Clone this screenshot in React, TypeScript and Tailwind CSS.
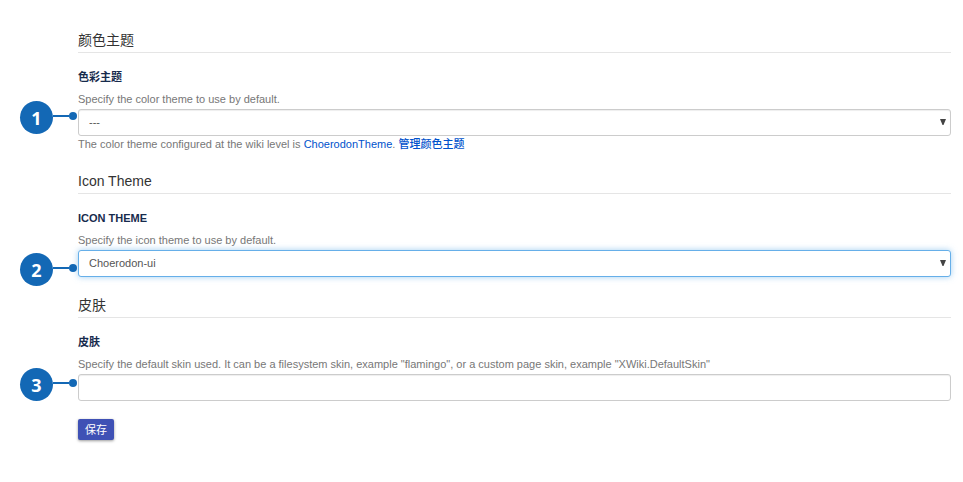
import type { ReactNode } from 'react';

const markerTops = {
  first: '-top-2',
  second: 'top-[3px]',
  third: '-top-[6px]',
};

function Marker({ value, place }: { value: number; place: keyof typeof markerTops }) {
  return (
    <div className={`absolute right-full ${markerTops[place]} flex items-center pr-px`}>
      <span className="flex size-[33px] items-center justify-center rounded-full bg-[#1368b5] font-['Open_Sans',sans-serif] text-lg font-bold text-white">
        {value}
      </span>
      <span className="flex items-center pb-[3px]">
        <span className="h-[2px] w-4 bg-[#1368b5]" />
        <span className="size-2 rounded-full bg-[#1368b5]" />
      </span>
    </div>
  );
}

function Section({ title, label, hint, id, children }: {
  title: string;
  label: string;
  hint: string;
  id: string;
  children: ReactNode;
}) {
  return (
    <section className="flex flex-col gap-[14px]">
      <h2 className="border-b border-[#e5e5e5] text-sm leading-6 text-[#333]">{title}</h2>
      <div className="flex flex-col gap-[2px]">
        <label htmlFor={id} className="self-start text-[11px] font-bold leading-5 text-[#172b4d]">
          {label}
        </label>
        <div className="flex flex-col">
          <p className="leading-5">{hint}</p>
          {children}
        </div>
      </div>
    </section>
  );
}

function Arrow() {
  return (
    <svg viewBox="0 0 6 6" className="pointer-events-none col-start-1 row-start-1 mb-[2px] mr-[5px] size-[6px] self-center justify-self-end fill-[#444]" aria-hidden="true">
      <path d="M0 0h6L3.5 6h-1z" />
    </svg>
  );
}

export default function App() {
  return (
    <main className="bg-white pb-10 pl-[78px] pr-3 pt-7 font-['Liberation_Sans','Noto_Sans_CJK_SC',sans-serif] text-[11px] text-[#777]">
      <form className="flex flex-col gap-4" onSubmit={(e) => e.preventDefault()}>
        <Section title="颜色主题" label="色彩主题" hint="Specify the color theme to use by default." id="color-theme">
          <div className="relative grid">
            <Marker value={1} place="first" />
            <select id="color-theme" className="col-start-1 row-start-1 h-[27px] w-full appearance-none rounded-[3px] border border-[#ccc] bg-white px-[10px] text-[#555] shadow-[inset_0_1px_1px_rgba(0,0,0,0.07)] outline-none">
              <option>---</option>
            </select>
            <Arrow />
          </div>
          <p className="leading-[17px]">
            The color theme configured at the wiki level is{' '}
            <a href="#theme" className="text-[#0052cc]">ChoerodonTheme</a>.{' '}
            <a href="#manage" className="font-medium text-[#0052cc]">管理颜色主题</a>
          </p>
        </Section>
        <Section title="Icon Theme" label="ICON THEME" hint="Specify the icon theme to use by default." id="icon-theme">
          <div className="relative grid">
            <Marker value={2} place="second" />
            <select id="icon-theme" className="col-start-1 row-start-1 h-[27px] w-full appearance-none rounded-[3px] border border-[#66afe9] bg-white px-[10px] text-[#555] shadow-[0_0_6px_rgba(102,175,233,0.6)] outline-none">
              <option>Choerodon-ui</option>
            </select>
            <Arrow />
          </div>
        </Section>
        <Section title="皮肤" label="皮肤" hint={'Specify the default skin used. It can be a filesystem skin, example "flamingo", or a custom page skin, example "XWiki.DefaultSkin"'} id="skin">
          <div className="relative grid">
            <Marker value={3} place="third" />
            <input id="skin" type="text" className="h-[27px] w-full rounded-[3px] border border-[#ccc] px-[10px] text-[#555] shadow-[inset_0_1px_1px_rgba(0,0,0,0.07)] outline-none" />
          </div>
        </Section>
        <button type="submit" className="mt-[2px] h-[21px] self-start rounded-[2px] bg-[#3f51b5] px-[7px] text-[11px] leading-5 text-white shadow-[0_1px_3px_rgba(0,0,0,0.4)]">
          保存
        </button>
      </form>
    </main>
  );
}
